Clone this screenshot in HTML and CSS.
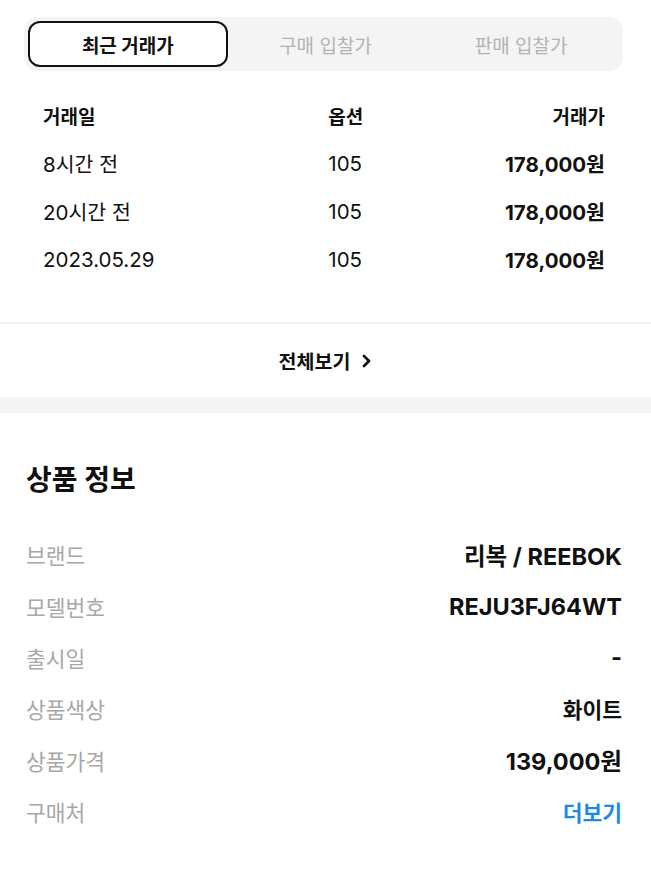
FILE: index.html
```html
<!DOCTYPE html>
<html lang="ko">
<head>
<meta charset="utf-8">
<link rel="stylesheet" href="styles.css">
</head>
<body>
<div class="tabs">
  <div class="tab active">최근 거래가</div>
  <div class="tab">구매 입찰가</div>
  <div class="tab">판매 입찰가</div>
</div>
<div class="table">
  <div class="row head">
    <span class="c1">거래일</span><span class="c2">옵션</span><span class="c3">거래가</span>
  </div>
  <div class="row">
    <span class="c1">8시간 전</span><span class="c2">105</span><span class="c3 price">178,000원</span>
  </div>
  <div class="row">
    <span class="c1">20시간 전</span><span class="c2">105</span><span class="c3 price">178,000원</span>
  </div>
  <div class="row">
    <span class="c1">2023.05.29</span><span class="c2">105</span><span class="c3 price">178,000원</span>
  </div>
</div>
<div class="divider"></div>
<div class="more">
  <span>전체보기</span>
  <svg class="chev" width="10" height="14" viewBox="0 0 10 14"><polyline points="2,2 7,7 2,12" fill="none" stroke="#111" stroke-width="2.8" stroke-linecap="round" stroke-linejoin="round"/></svg>
</div>
<div class="band"></div>
<div class="info">
  <h2 class="title">상품 정보</h2>
  <div class="irow"><span class="label">브랜드</span><span class="val">리복 / REEBOK</span></div>
  <div class="irow"><span class="label">모델번호</span><span class="val">REJU3FJ64WT</span></div>
  <div class="irow"><span class="label">출시일</span><span class="val">-</span></div>
  <div class="irow"><span class="label">상품색상</span><span class="val ko">화이트</span></div>
  <div class="irow"><span class="label">상품가격</span><span class="val">139,000원</span></div>
  <div class="irow"><span class="label">구매처</span><span class="val ko link">더보기</span></div>
</div>
</body>
</html>
```
FILE: styles.css
```css
* { box-sizing: border-box; }
body {
  margin: 0;
  background: #fff;
  color: #111;
  font-family: Inter, "Noto Sans CJK KR", sans-serif;
}
.tabs {
  margin: 17px 28px 0 24px;
  height: 54px;
  padding: 4px;
  background: #f4f4f4;
  border-radius: 14px;
  display: flex;
}
.tab {
  flex: 1;
  display: flex;
  align-items: center;
  justify-content: center;
  font-size: 19px;
  color: #b3b3b3;
  border-radius: 12px;
}
.tab.active {
  background: #fff;
  border: 2px solid #111;
  color: #111;
  font-weight: 700;
}
.table {
  margin-top: 20px;
  padding: 0 46px 39px 43px;
}
.row {
  height: 48px;
  display: grid;
  grid-template-columns: 1fr 1fr 1fr;
  align-items: center;
  font-size: 20.5px;
}
.row.head { font-size: 19px; font-weight: 700; }
.c1 { text-align: left; }
.c2 { text-align: left; padding-left: 98px; }
.c3 { text-align: right; }
.price { font-weight: 700; }
.divider { height: 2px; background: #f0f0f0; }
.more {
  height: 73px;
  display: flex;
  align-items: center;
  justify-content: center;
  gap: 12px;
  font-size: 19.5px;
  font-weight: 700;
}
.chev { margin-top: 1px; }
.band { height: 16px; background: #f4f4f4; }
.info { padding: 0 29px 0 26px; }
.title {
  margin: 50px 0 32px;
  font-size: 28px;
  line-height: 34px;
  font-weight: 700;
}
.irow {
  height: 51.4px;
  display: flex;
  align-items: center;
  justify-content: space-between;
}
.label { font-size: 21.5px; color: #a8a8a8; }
.val { font-size: 23.5px; font-weight: 700; }
.val.ko { font-size: 21.5px; }
.val.link { color: #1b8ae8; }
```
